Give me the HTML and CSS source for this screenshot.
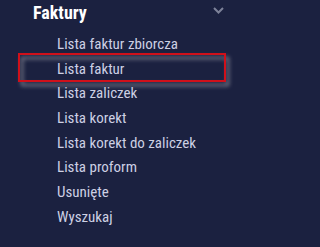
FILE: index.html
```html
<!DOCTYPE html>
<html lang="pl">
<head>
<meta charset="utf-8">
<link rel="stylesheet" href="styles.css">
</head>
<body>
<nav class="menu">
  <div class="section-head">
    <span class="section-title">Faktury</span>
    <svg class="chevron" width="11" height="7" viewBox="0 0 11 7"><path d="M1 1 L5.5 5.5 L10 1" fill="none" stroke="#7d8299" stroke-width="2"/></svg>
  </div>
  <ul class="items">
    <li class="item">Lista faktur zbiorcza</li>
    <li class="item active">Lista faktur</li>
    <li class="item">Lista zaliczek</li>
    <li class="item">Lista korekt</li>
    <li class="item">Lista korekt do zaliczek</li>
    <li class="item">Lista proform</li>
    <li class="item">Usunięte</li>
    <li class="item">Wyszukaj</li>
  </ul>
</nav>
</body>
</html>
```
FILE: styles.css
```css
html, body {
  margin: 0;
  padding: 0;
  background: #1b2140;
  width: 242px;
  height: 247px;
  overflow: hidden;
}
.menu {
  font-family: "Roboto Condensed", "DejaVu Sans Condensed", sans-serif;
  padding-top: 2px;
}
.section-head {
  display: flex;
  align-items: center;
  justify-content: space-between;
  padding: 0 18px 0 33px;
  height: 22px;
  line-height: 22px;
}
.section-title {
  color: #ffffff;
  font-weight: bold;
  font-size: 18px;
}
.chevron {
  display: block;
  margin-top: -5px;
}
.items {
  list-style: none;
  margin: 8px 0 0 0;
  padding: 0;
}
.item {
  position: relative;
  color: #cdd0e4;
  font-size: 15px;
  height: 24.7px;
  line-height: 24.7px;
  padding-left: 57px;
}
.item.active::after {
  content: "";
  position: absolute;
  left: 18px;
  top: -4px;
  width: 208px;
  height: 29px;
  box-sizing: border-box;
  border: 2px solid #d0101a;
  filter: drop-shadow(3px 4px 2px rgba(150, 150, 160, 0.95));
}
```
